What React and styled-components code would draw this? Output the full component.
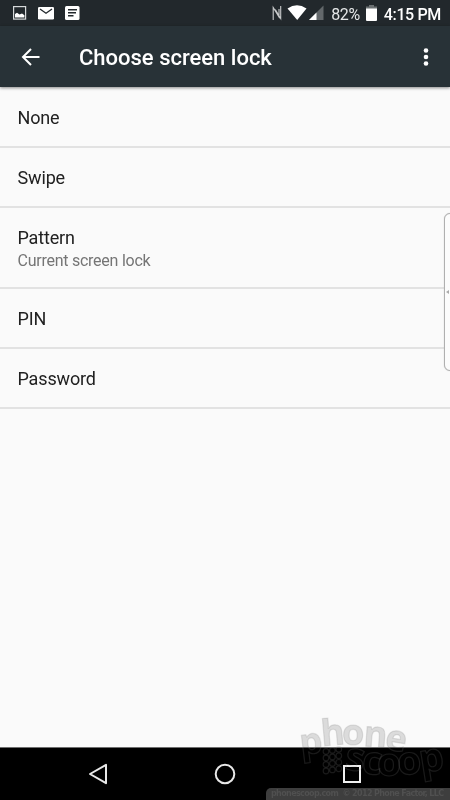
import React from 'react';
import styled, { createGlobalStyle } from 'styled-components';

const GlobalStyle = createGlobalStyle`
  * {
    box-sizing: border-box;
  }

  body {
    margin: 0;
    background: #fafafa;
    font-family: Roboto, sans-serif;
  }
`;

const Screen = styled.div`
  position: relative;
  display: flex;
  flex-direction: column;
  width: 450px;
  height: 800px;
  overflow: hidden;
  background: #fafafa;
`;

const StatusBar = styled.div`
  display: flex;
  align-items: center;
  justify-content: space-between;
  height: 26px;
  padding: 0 9px 0 12px;
  background: #22282c;
  color: #fff;
`;

const StatusIcons = styled.div`
  display: flex;
  align-items: center;
  height: 26px;
`;

const BatteryLevel = styled.span`
  margin: 0 6px 0 7px;
  padding-top: 3px;
  font-size: 16px;
  line-height: 25px;
  letter-spacing: -0.4px;
  color: #e4e6e7;
`;

const Clock = styled.span`
  margin-left: 7px;
  padding-top: 3px;
  font-size: 16px;
  font-weight: 500;
  line-height: 25px;
  letter-spacing: -0.35px;
`;

const AppBar = styled.header`
  position: relative;
  display: flex;
  align-items: center;
  flex: none;
  height: 61px;
  padding: 0 20px 0 19px;
  background: #283237;
  color: #fff;
  box-shadow: 0 1px 3px rgba(0, 0, 0, 0.45);
`;

const Title = styled.h1`
  flex: 1;
  margin: 2px 0 0 36px;
  font-size: 22px;
  font-weight: 500;
  line-height: 30px;
`;

const Icon = styled.svg`
  display: block;
  flex: none;
`;

const List = styled.ul`
  flex: 1;
  margin: 0;
  padding: 0;
  list-style: none;
`;

const Item = styled.li`
  display: flex;
  flex-direction: column;
  justify-content: center;
  height: ${({ $height }) => $height}px;
  padding: 2px 0 0 17.5px;
  border-bottom: 2px solid #e2e2e2;
`;

const Name = styled.span`
  font-size: 18px;
  line-height: 24px;
  letter-spacing: -0.15px;
  color: #212121;
`;

const Summary = styled.span`
  font-size: 16px;
  line-height: 21px;
  letter-spacing: -0.25px;
  color: #757575;
`;

// Panel lateral que asoma por el borde derecho
const EdgePanel = styled.div`
  position: absolute;
  top: 213px;
  right: -9px;
  display: flex;
  align-items: center;
  width: 15px;
  height: 158px;
  padding-left: 1px;
  border: 1px solid #b0b0b0;
  border-radius: 6px;
  background: #fcfcfc;
  box-shadow: 0 0 1px #bbb;
`;

const NavBar = styled.nav`
  display: flex;
  align-items: center;
  justify-content: space-between;
  height: 53px;
  padding: 0 86px;
  border-top: 1px solid #6e6e6e;
  background: #000;
`;

const Watermark = styled.svg`
  position: absolute;
  right: 0;
  bottom: 0;
  mix-blend-mode: ${({ $blend }) => $blend || 'normal'};
`;

const Caption = styled.div`
  position: absolute;
  right: 0;
  bottom: 0;
  width: 184px;
  height: 12px;
  padding-left: 5px;
  border-radius: 5px 0 0 0;
  background: #3e3e3e;
  color: #505050;
  font: 700 8px/12px 'DejaVu Sans', sans-serif;
  letter-spacing: -0.62px;
  white-space: pre;
`;

const items = [
  { name: 'None', height: 61 },
  { name: 'Swipe', height: 60 },
  { name: 'Pattern', summary: 'Current screen lock', height: 81 },
  { name: 'PIN', height: 60 },
  { name: 'Password', height: 60 },
];

const phone = [
  ['p', 301, 755, -7],
  ['h', 322, 746, -5],
  ['o', 342, 745, 0],
  ['n', 363, 746, 4],
  ['e', 384, 749, 9],
];

const scoop = [
  ['s', 344, 769, 8],
  ['c', 361, 773, 6],
  ['o', 377, 776, 0],
  ['o', 398, 775, -4],
  ['p', 421, 773, -9],
];

const dots = [0, 1, 2, 3].flatMap((row) => [0, 1, 2].map((col) => ({
  x: 326 + col * 6.4,
  y: 751.5 + row * 6.5 - col * 1.1,
})));

const letters = (word, size) => word.map(([char, x, y, angle]) => (
  <text key={x} x={x} y={y} fontSize={size} transform={`rotate(${angle} ${x} ${y})`}>{char}</text>
));

const App = () => (
  <>
    <GlobalStyle />
    <Screen>
      <StatusBar>
        <StatusIcons>
          <Icon width="70" height="26" viewBox="0 0 70 26">
            <rect x="1.6" y="6.6" width="12" height="12.5" fill="none" stroke="#d5d8d9" strokeWidth="1.2" />
            <path d="M3 17.500v-3.500l2-1.200 2.500 1.700 2.500-1 2.400 1.700V17.500z" fill="#fff" />
            <rect x="26" y="7" width="16" height="12.5" rx="1.3" fill="#fff" />
            <path d="m28 9 6 4.3L40 9" fill="none" stroke="#22282c" strokeWidth="1.3" />
            <rect x="53" y="6" width="14.5" height="14" rx="1.5" fill="#fff" />
            <path d="M56 9.8h9M56 12.8h8M56 15.8h5.5" stroke="#22282c" strokeWidth="1.4" />
          </Icon>
        </StatusIcons>
        <StatusIcons>
          <Icon width="52" height="26" viewBox="273 0 52 26">
            <path d="M274.200 20V7.500l5.800 9.500V9M281.700 6V18.500l-5.400-9" fill="none" stroke="#c8cacb" strokeWidth="1.1" />
            <path d="M288.500 8.500Q298 2 307.500 8.500L298.200 20z" fill="#fff" />
            <path d="M324.500 5.500V20H310z" fill="#63686b" />
            <path d="M317.500 12.500V20H310z" fill="#fff" />
          </Icon>
          <BatteryLevel>82%</BatteryLevel>
          <Icon width="11" height="26" viewBox="0 0 11 26">
            <path d="M3 5h5v1.500h3V9H0V6.500h3z" fill="#6b7072" />
            <path d="M0 8.500h11V20a1 1 0 0 1-1 1H1a1 1 0 0 1-1-1z" fill="#fff" />
          </Icon>
          <Clock>4:15 PM</Clock>
        </StatusIcons>
      </StatusBar>
      <AppBar>
        <Icon width="24" height="24" viewBox="0 0 24 24">
          <path d="M20.500 12H4.500M12 4l-8 8 8 8" fill="none" stroke="#fff" strokeWidth="2" />
        </Icon>
        <Title>Choose screen lock</Title>
        <Icon width="8" height="22" viewBox="0 0 8 22" fill="#fff">
          <circle cx="4" cy="4.500" r="2.300" />
          <circle cx="4" cy="11" r="2.300" />
          <circle cx="4" cy="17.500" r="2.300" />
        </Icon>
      </AppBar>
      <List>
        {items.map(({ name, summary, height }) => (
          <Item key={name} $height={height}>
            <Name>{name}</Name>
            {summary && <Summary>{summary}</Summary>}
          </Item>
        ))}
      </List>
      <NavBar>
        <Icon width="24" height="24" viewBox="0 0 24 24">
          <path d="M20 2.800v18.400L4 12z" fill="none" stroke="#e8e8e8" strokeWidth="2" strokeLinejoin="round" />
        </Icon>
        <Icon width="24" height="24" viewBox="0 0 24 24">
          <circle cx="12" cy="12" r="9.300" fill="none" stroke="#e8e8e8" strokeWidth="2" />
        </Icon>
        <Icon width="24" height="24" viewBox="0 0 24 24">
          <rect x="4" y="4" width="16" height="16" fill="none" stroke="#f0f0f0" strokeWidth="2" />
        </Icon>
      </NavBar>
      <EdgePanel>
        <Icon width="3" height="4" viewBox="0 0 3 4">
          <path d="M3 0v4L0 2z" fill="#aaa" />
        </Icon>
      </EdgePanel>
      <Watermark width="184" height="110" viewBox="266 690 184 110" $blend="multiply">
        <g fill="#e0e0e0" fontFamily="Open Sans, sans-serif" fontWeight="700">
          {letters(phone, 36)}
        </g>
      </Watermark>
      <Watermark width="184" height="110" viewBox="266 690 184 110">
        <g fill="none" stroke="#808080" strokeOpacity="0.2" strokeWidth="1.2" fontFamily="Open Sans, sans-serif" fontWeight="700">
          {letters(phone, 36)}
          {letters(scoop, 39)}
          {dots.map(({ x, y }) => (
            <circle key={`${x}-${y}`} cx={x} cy={y} r="2.800" />
          ))}
        </g>
      </Watermark>
      <Caption>phonescoop.com  © 2012 Phone Factor, LLC</Caption>
    </Screen>
  </>
);

export default App;
